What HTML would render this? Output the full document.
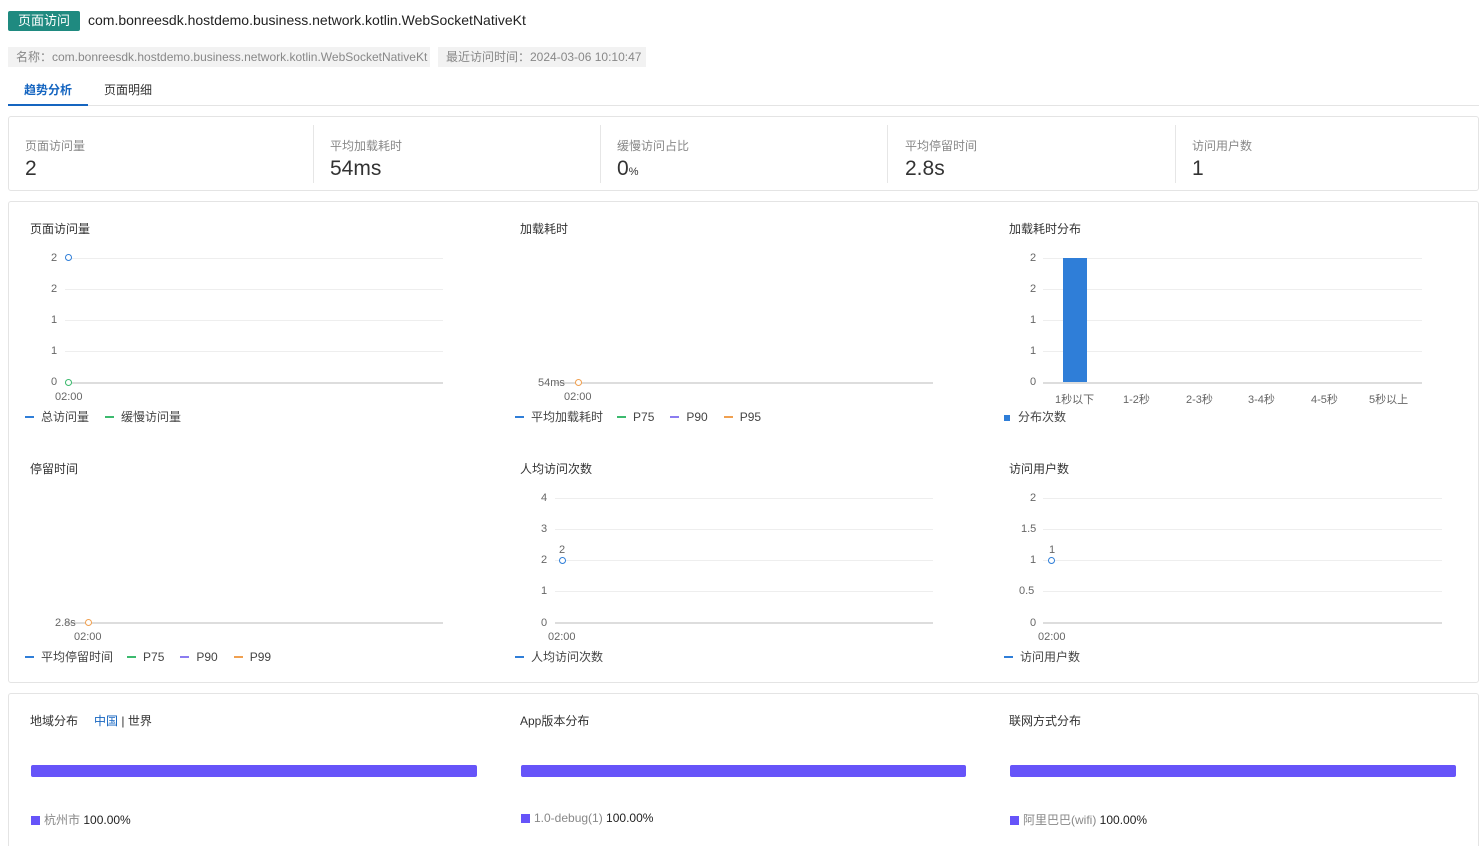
<!DOCTYPE html>
<html><head><meta charset="utf-8">
<style>
*{margin:0;padding:0;box-sizing:border-box}
html,body{width:1483px;height:846px;overflow:hidden}
body{background:#fff;font-family:"Liberation Sans","Noto Sans CJK SC",sans-serif;color:#333;position:relative}
.a{position:absolute;white-space:nowrap}
.card{position:absolute;border:1px solid #e4e4e4;border-radius:3px;background:#fff}
.lbl{font-size:12px;color:#888}
.val{font-size:21px;color:#333}
.sep{position:absolute;top:8px;width:1px;height:58px;background:#e6e6e6}
.t{font-size:12px;color:#333}
.ax{font-size:11px;color:#666}
.leg{font-size:12px;color:#444}
.dash{display:inline-block;width:9px;height:2px;vertical-align:middle;margin-right:7px;position:relative;top:-1px}
.gl{position:absolute;height:1px;background:#eee}
.base{position:absolute;height:2px;background:#ddd}
.dot{position:absolute;width:7px;height:7px;border-radius:50%;border:1.5px solid #2f7ed8;background:#fff}
.sq{display:inline-block;width:9px;height:9px;background:#6654f9;margin-right:4px;position:relative;top:1px}
</style></head><body>
<div class="a" style="left:8px;top:11px;width:72px;height:20px;background:#1f8a80;color:#fff;font-size:13px;line-height:20px;text-align:center;border-radius:2px">页面访问</div>
<div class="a" style="left:88px;top:12px;font-size:14px;color:#222">com.bonreesdk.hostdemo.business.network.kotlin.WebSocketNativeKt</div>
<div class="a" style="left:8px;top:47px;width:422px;height:20px;background:#f2f2f2;font-size:12px;color:#888;line-height:20px;padding-left:8px">名称：com.bonreesdk.hostdemo.business.network.kotlin.WebSocketNativeKt</div>
<div class="a" style="left:438px;top:47px;width:208px;height:20px;background:#f2f2f2;font-size:12px;color:#888;line-height:20px;padding-left:8px">最近访问时间：2024-03-06 10:10:47</div>
<div class="a" style="left:24px;top:81px;font-size:12px;color:#1565c0;font-weight:bold">趋势分析</div>
<div class="a" style="left:104px;top:81px;font-size:12px;color:#333">页面明细</div>
<div class="a" style="left:8px;top:105px;width:1471px;height:1px;background:#e4e4e4"></div>
<div class="a" style="left:8px;top:104px;width:80px;height:2px;background:#1565c0"></div>

<div class="card" style="left:8px;top:116px;width:1471px;height:75px">
<div class="a lbl" style="left:16px;top:20px">页面访问量</div><div class="a val" style="left:16px;top:40px">2</div>
<div class="sep" style="left:304px"></div>
<div class="a lbl" style="left:321px;top:20px">平均加载耗时</div><div class="a val" style="left:321px;top:40px">54ms</div>
<div class="sep" style="left:591px"></div>
<div class="a lbl" style="left:608px;top:20px">缓慢访问占比</div><div class="a val" style="left:608px;top:40px">0<span style="font-size:11px">%</span></div>
<div class="sep" style="left:878px"></div>
<div class="a lbl" style="left:896px;top:20px">平均停留时间</div><div class="a val" style="left:896px;top:40px">2.8s</div>
<div class="sep" style="left:1166px"></div>
<div class="a lbl" style="left:1183px;top:20px">访问用户数</div><div class="a val" style="left:1183px;top:40px">1</div>
</div>

<div class="card" style="left:8px;top:201px;width:1471px;height:482px"></div>
<div class="a t" style="left:30px;top:220px">页面访问量</div>
<div class="gl" style="left:65px;top:258px;width:378px"></div><div class="gl" style="left:65px;top:289px;width:378px"></div><div class="gl" style="left:65px;top:320px;width:378px"></div><div class="gl" style="left:65px;top:351px;width:378px"></div><div class="base" style="left:65px;top:382px;width:378px"></div>
<div class="a ax" style="left:51px;top:252px">2</div><div class="a ax" style="left:51px;top:283px">2</div><div class="a ax" style="left:51px;top:314px">1</div><div class="a ax" style="left:51px;top:345px">1</div><div class="a ax" style="left:51px;top:376px">0</div>
<div class="a ax" style="left:55px;top:391px">02:00</div>
<div class="dot" style="left:65px;top:254px"></div><div class="dot" style="left:65px;top:379px;border-color:#3cba6e"></div>
<div class="a leg" style="left:25px;top:408px"><span class="dash" style="background:#2f7ed8"></span>总访问量<span style="display:inline-block;width:16px"></span><span class="dash" style="background:#3cba6e"></span>缓慢访问量</div>
<div class="a t" style="left:520px;top:220px">加载耗时</div>
<div class="base" style="left:555px;top:382px;width:378px"></div>
<div class="a ax" style="left:538px;top:377px">54ms</div>
<div class="a ax" style="left:564px;top:391px">02:00</div>
<div class="dot" style="left:575px;top:379px;border-color:#f0a050"></div>
<div class="a leg" style="left:515px;top:408px"><span class="dash" style="background:#2f7ed8"></span>平均加载耗时<span style="display:inline-block;width:14px"></span><span class="dash" style="background:#3cba6e"></span>P75<span style="display:inline-block;width:16px"></span><span class="dash" style="background:#8b7cf0"></span>P90<span style="display:inline-block;width:16px"></span><span class="dash" style="background:#f0a050"></span>P95</div>
<div class="a t" style="left:1009px;top:220px">加载耗时分布</div>
<div class="gl" style="left:1043px;top:258px;width:379px"></div><div class="gl" style="left:1043px;top:289px;width:379px"></div><div class="gl" style="left:1043px;top:320px;width:379px"></div><div class="gl" style="left:1043px;top:351px;width:379px"></div><div class="base" style="left:1043px;top:382px;width:379px"></div>
<div class="a ax" style="left:1030px;top:252px">2</div><div class="a ax" style="left:1030px;top:283px">2</div><div class="a ax" style="left:1030px;top:314px">1</div><div class="a ax" style="left:1030px;top:345px">1</div><div class="a ax" style="left:1030px;top:376px">0</div>
<div class="a" style="left:1063px;top:258px;width:24px;height:124px;background:#2f7ed8"></div>
<div class="a ax" style="left:1055px;top:391px">1秒以下</div><div class="a ax" style="left:1123px;top:391px">1-2秒</div><div class="a ax" style="left:1186px;top:391px">2-3秒</div><div class="a ax" style="left:1248px;top:391px">3-4秒</div><div class="a ax" style="left:1311px;top:391px">4-5秒</div><div class="a ax" style="left:1369px;top:391px">5秒以上</div>
<div class="a leg" style="left:1004px;top:408px"><span style="display:inline-block;width:6px;height:6px;background:#2f7ed8;margin-right:8px;vertical-align:middle"></span>分布次数</div>
<div class="a t" style="left:30px;top:460px">停留时间</div>
<div class="base" style="left:65px;top:622px;width:378px"></div>
<div class="a ax" style="left:55px;top:617px">2.8s</div>
<div class="a ax" style="left:74px;top:631px">02:00</div>
<div class="dot" style="left:85px;top:619px;border-color:#f0a050"></div>
<div class="a leg" style="left:25px;top:648px"><span class="dash" style="background:#2f7ed8"></span>平均停留时间<span style="display:inline-block;width:14px"></span><span class="dash" style="background:#3cba6e"></span>P75<span style="display:inline-block;width:16px"></span><span class="dash" style="background:#8b7cf0"></span>P90<span style="display:inline-block;width:16px"></span><span class="dash" style="background:#f0a050"></span>P99</div>
<div class="a t" style="left:520px;top:460px">人均访问次数</div>
<div class="gl" style="left:555px;top:498px;width:378px"></div><div class="gl" style="left:555px;top:529px;width:378px"></div><div class="gl" style="left:555px;top:560px;width:378px"></div><div class="gl" style="left:555px;top:591px;width:378px"></div><div class="base" style="left:555px;top:622px;width:378px"></div>
<div class="a ax" style="left:541px;top:492px">4</div><div class="a ax" style="left:541px;top:523px">3</div><div class="a ax" style="left:541px;top:554px">2</div><div class="a ax" style="left:541px;top:585px">1</div><div class="a ax" style="left:541px;top:617px">0</div>
<div class="a ax" style="left:559px;top:544px">2</div>
<div class="a ax" style="left:548px;top:631px">02:00</div>
<div class="dot" style="left:559px;top:557px"></div>
<div class="a leg" style="left:515px;top:648px"><span class="dash" style="background:#2f7ed8"></span>人均访问次数</div>
<div class="a t" style="left:1009px;top:460px">访问用户数</div>
<div class="gl" style="left:1043px;top:498px;width:399px"></div><div class="gl" style="left:1043px;top:529px;width:399px"></div><div class="gl" style="left:1043px;top:560px;width:399px"></div><div class="gl" style="left:1043px;top:591px;width:399px"></div><div class="base" style="left:1043px;top:622px;width:399px"></div>
<div class="a ax" style="left:1030px;top:492px">2</div><div class="a ax" style="left:1021px;top:523px">1.5</div><div class="a ax" style="left:1030px;top:554px">1</div><div class="a ax" style="left:1019px;top:585px">0.5</div><div class="a ax" style="left:1030px;top:617px">0</div>
<div class="a ax" style="left:1049px;top:544px">1</div>
<div class="a ax" style="left:1038px;top:631px">02:00</div>
<div class="dot" style="left:1048px;top:557px"></div>
<div class="a leg" style="left:1004px;top:648px"><span class="dash" style="background:#2f7ed8"></span>访问用户数</div>

<div class="card" style="left:8px;top:693px;width:1471px;height:170px"></div>
<div class="a t" style="left:30px;top:712px">地域分布<span style="display:inline-block;width:16px"></span><span style="color:#1565c0">中国</span> | 世界</div>
<div class="a t" style="left:520px;top:712px">App版本分布</div>
<div class="a t" style="left:1009px;top:712px">联网方式分布</div>
<div class="a" style="left:31px;top:765px;width:446px;height:12px;background:#6654f9;border-radius:2px"></div>
<div class="a" style="left:521px;top:765px;width:445px;height:12px;background:#6654f9;border-radius:2px"></div>
<div class="a" style="left:1010px;top:765px;width:446px;height:12px;background:#6654f9;border-radius:2px"></div>
<div class="a" style="left:31px;top:811px;font-size:12px;color:#888"><span class="sq"></span>杭州市 <span style="color:#222">100.00%</span></div>
<div class="a" style="left:521px;top:811px;font-size:12px;color:#888"><span class="sq"></span>1.0-debug(1) <span style="color:#222">100.00%</span></div>
<div class="a" style="left:1010px;top:811px;font-size:12px;color:#888"><span class="sq"></span>阿里巴巴(wifi) <span style="color:#222">100.00%</span></div>
</body></html>
